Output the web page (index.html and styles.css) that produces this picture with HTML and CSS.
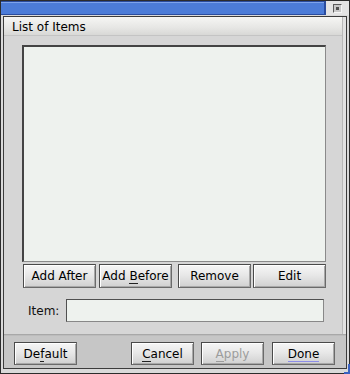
FILE: index.html
```html
<!DOCTYPE html>
<html>
<head>
<meta charset="utf-8">
<link rel="stylesheet" href="styles.css">
</head>
<body>
<div class="window">
  <div class="titlebar">
    <div class="caption-strip"><div class="caption-fill"></div></div>
    <div class="close"><span class="close-box"><span class="close-dot"></span></span></div>
  </div>
  <div class="frame">
    <div class="group">
      <div class="group-header">List of Items</div>
      <div class="group-body">
        <div class="listbox"></div>
        <div class="list-buttons">
          <button class="btn btn-list">Add After</button>
          <button class="btn btn-list btn-gap-s">Add <u>B</u>efore</button>
          <button class="btn btn-list btn-gap-l">Remove</button>
          <button class="btn btn-list btn-gap-xs">Edit</button>
        </div>
        <div class="item-row">
          <span class="item-label">Item:</span>
          <div class="item-input"></div>
        </div>
      </div>
    </div>
    <div class="bottom-bar">
      <button class="btn btn-dlg">De<u>f</u>ault</button>
      <div class="spacer"></div>
      <button class="btn btn-dlg"><u>C</u>ancel</button>
      <button class="btn btn-dlg btn-disabled"><u>A</u>pply</button>
      <button class="btn btn-dlg btn-default"><span class="focus">Done</span></button>
    </div>
  </div>
  <div class="grip"></div>
</div>
</body>
</html>
```

FILE: styles.css
```css
html, body {
  margin: 0;
  padding: 0;
  background: #d8d8d8;
}

.window {
  position: relative;
  width: 350px;
  height: 374px;
  box-sizing: border-box;
  border: 1px solid #2c2c2c;
  background: #dadada;
  padding: 0 2px 4px 2px;
  display: flex;
  flex-direction: column;
  font-family: "DejaVu Sans", Verdana, sans-serif;
  font-size: 11px;
  color: #000;
}

.titlebar {
  height: 14px;
  min-height: 14px;
  width: 348px;
  margin-left: -2px;
  display: flex;
  flex: none;
  background: #2a4c9e;
}

.caption-strip {
  width: 325px;
  height: 14px;
  flex: none;
  box-sizing: border-box;
  background-color: #2a4c9e;
  padding: 1px 2px 1px 0;
}

.caption-fill {
  width: 323px;
  height: 12px;
  background-color: #4c7cd8;
  border-top: 1px solid #7ea4ec;
  box-sizing: border-box;
}

.close {
  width: 23px;
  height: 14px;
  flex: none;
  display: flex;
  align-items: center;
  justify-content: center;
  background: #e4e4e4;
}

.close-box {
  width: 9px;
  height: 9px;
  box-sizing: border-box;
  border: 1px solid #5a5a5a;
  border-right-color: #f4f4f4;
  border-bottom-color: #f4f4f4;
  background: #c8c8c8;
  display: flex;
  align-items: center;
  justify-content: center;
}

.close-dot {
  width: 3px;
  height: 3px;
  background: #505050;
}

.frame {
  flex: 1;
  margin-top: 1px;
  border: 1px solid #3c3c3c;
  display: flex;
  flex-direction: column;
  background: #e2e2e2;
}

.group {
  flex: 1;
  margin-right: 3px;
  border-right: 1px solid #b8b8b8;
  background: #d6d6d6;
  display: flex;
  flex-direction: column;
}

.group-header {
  height: 19px;
  box-sizing: border-box;
  padding: 3px 0 0 8px;
  background: linear-gradient(#f6f6f4, #e6e6e4 60%, #d8d8d6);
  border-bottom: 1px solid #c4c4c4;
  font-size: 12px;
  line-height: 14px;
}

.group-body {
  flex: 1;
  padding: 9px 16px 0 18px;
  display: flex;
  flex-direction: column;
}

.listbox {
  height: 217px;
  flex: none;
  box-sizing: border-box;
  background: #eef2ee;
  border: 1px solid #8a8a8a;
  border-top: 2px solid #444;
  border-left: 2px solid #444;
}

.list-buttons {
  display: flex;
  margin-top: 2px;
  padding-left: 1px;
}

.btn {
  box-sizing: border-box;
  margin: 0;
  padding: 0;
  font-family: "DejaVu Sans", Verdana, sans-serif;
  font-size: 12px;
  color: #000;
  background: linear-gradient(#f6f6f6, #e8e8e8 45%, #d0d0d0);
  border: 1px solid #4a4a4a;
  border-right-color: #6a6a6a;
  border-bottom-color: #6a6a6a;
  box-shadow: inset 1px 1px 0 #ffffff, inset -1px -1px 0 #a8a8a8;
  line-height: 14px;
}

.btn u {
  text-decoration: none;
  border-bottom: 1px solid #222;
}

.btn-list {
  width: 73px;
  height: 24px;
}

.btn-gap-s { margin-left: 3px; }
.btn-gap-l { margin-left: 6px; }
.btn-gap-xs { margin-left: 2px; }

.item-row {
  display: flex;
  align-items: center;
  margin-top: 11px;
}

.item-label {
  width: 40px;
  padding-left: 6px;
  box-sizing: border-box;
  font-size: 12px;
  color: #111;
}

.item-input {
  flex: 1;
  height: 23px;
  box-sizing: border-box;
  margin-left: 4px;
  margin-right: 2px;
  background: #eef2ee;
  border: 1px solid #888;
  border-top-color: #505050;
  border-left-color: #505050;
}

.bottom-bar {
  height: 34px;
  box-sizing: border-box;
  flex: none;
  display: flex;
  align-items: flex-start;
  padding: 7px 11px 0 10px;
  background: #c6c6c6;
  border-top: 1px solid #a8a8a8;
  box-shadow: inset 0 1px 0 #bcbcbc;
}

.spacer {
  flex: 1;
}

.btn-dlg {
  width: 63px;
  height: 23px;
  margin-left: 7px;
}

.btn-dlg:first-child {
  margin-left: 0;
}

.btn-disabled {
  color: #9c9c9c;
}

.btn-disabled u {
  border-bottom-color: #9c9c9c;
}

.btn-default {
  margin-left: 8px;
}

.focus {
  border-bottom: 1px solid #8c8ce8;
}

.grip {
  position: absolute;
  right: -1px;
  bottom: -1px;
  width: 6px;
  height: 10px;
  border-right: 2px solid #3a62c0;
  border-bottom: 2px solid #3a62c0;
  box-sizing: border-box;
}
```
